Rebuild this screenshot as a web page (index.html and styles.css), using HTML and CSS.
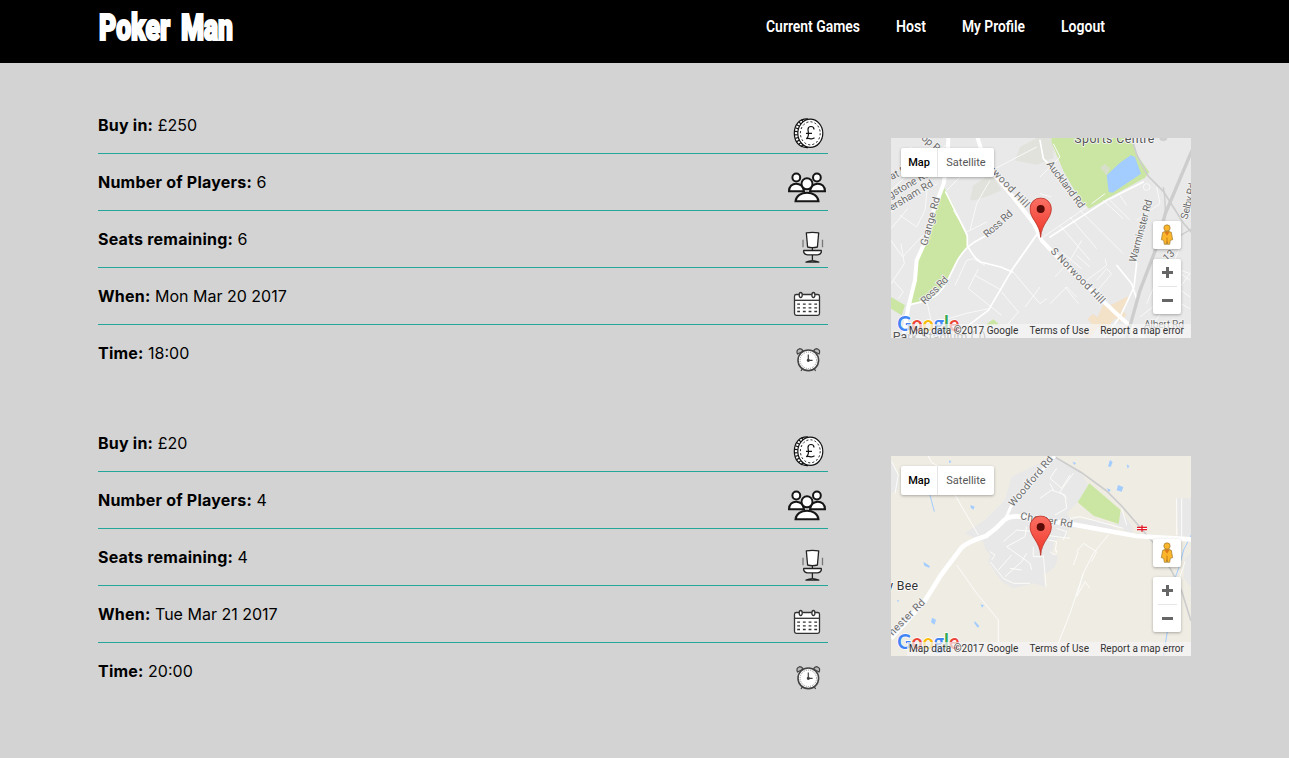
FILE: index.html
```html
<!DOCTYPE html>
<html lang="en">
<head>
<meta charset="utf-8">
<title>Poker Man</title>
<link rel="stylesheet" href="styles.css">
</head>
<body>
<svg class="sprite" aria-hidden="true">
  <symbol id="coin" viewBox="0 0 44 40">
    <path d="M24 6C15 5.500 10.300 12 10.300 20.300S15 35 24 34.600" fill="#fff" stroke="#111" stroke-width="1.200"/>
    <path d="M19 7.500C14 11 12.200 15 12.200 20.300S14 30 19 33.500" fill="none" stroke="#111" stroke-width="3" stroke-dasharray="1.200 2"/>
    <ellipse cx="26.300" cy="20.300" rx="12.500" ry="14.100" fill="#fff" stroke="#111" stroke-width="1.200"/>
    <ellipse cx="26.300" cy="20.300" rx="9.900" ry="11.500" fill="none" stroke="#111" stroke-width="1" stroke-dasharray="2 2.200"/>
    <path d="M30 16.500c0-4-6-4-6 0 0 3 2.200 6.500-1.800 9.300 3-1.500 5 1.600 8.300-1M22 20.300h6" fill="none" stroke="#111" stroke-width="1.200"/>
  </symbol>
  <symbol id="players" viewBox="0 0 44 40">
    <g fill="#fff" stroke="#161616" stroke-width="2">
      <circle cx="12.300" cy="7.500" r="3.900"/><circle cx="32.900" cy="7.500" r="3.900"/>
      <path d="M5 21.200c0-10 14-10 15 0zM26 21.200c1-10 15-10 15 0z"/>
      <path d="M11.500 31.300c1-11.500 22-11.500 23 0z"/>
      <circle cx="23" cy="13.800" r="5.500"/>
    </g>
  </symbol>
  <symbol id="chair" viewBox="0 0 44 40">
    <g fill="#fff" stroke="#222" stroke-width="1.300" stroke-linejoin="round">
      <path d="M22.300 5.800Q28.300 4.800 34.700 5.800L33.400 20q-5 1.300-9.800 0z"/>
      <path d="M19.700 23.500h17.600v1.800q-1 2.500-3.800 2.500h-10q-2.800 0-3.800-2.500z"/>
      <path d="M28.400 20.600v2.900M28.400 28v5M22 35.200q6.400-3.200 12.800 0z"/>
      <path d="M19 12.800v7.500M38.500 12.800v7.500" stroke="#777"/>
    </g>
  </symbol>
  <symbol id="calendar" viewBox="0 0 44 40">
    <g fill="#fff" stroke="#333" stroke-width="1.300">
      <rect x="10.500" y="10.500" width="25" height="20.800" rx="1.800"/>
      <path d="M10.500 16.300h25"/>
      <ellipse cx="16.700" cy="11" rx="1.500" ry="2.500"/><ellipse cx="29.400" cy="11" rx="1.500" ry="2.500"/>
      <path d="M13.200 20.200h20.500M13.200 23.900h20.500M13.200 27.500h20.500" stroke-dasharray="2.800 2.900"/>
    </g>
  </symbol>
  <symbol id="clock" viewBox="0 0 44 40">
    <g fill="#fff" stroke="#444" stroke-width="1.200">
      <path d="M13.500 13q-1.800-4 2-5.300 2.500 0 3.500 2.500zM35.100 13q1.800-4-2-5.300-2.500 0-3.500 2.500z" fill="#bbb"/>
      <path d="M18.500 27.500l-1.500 2.500M30.100 27.500l1.500 2.500"/>
      <circle cx="24.300" cy="19.300" r="10.300" stroke-width="1.600"/>
      <circle cx="24.300" cy="19.300" r="8.200" stroke="#777" stroke-width=".8" stroke-dasharray="1 1"/>
      <path d="M24.300 13.500v5.800h4.300" fill="none"/><circle cx="24.300" cy="19.300" r="1" fill="#333"/>
    </g>
  </symbol>
  <symbol id="pegman" viewBox="0 0 84 84">
    <path d="M29 34q13-8 26 0l4 22-7 2-2 12h-7v-7h-2v7h-7l-2-12-7-2z" fill="#fbb62c" stroke="#97752f" stroke-width="2"/>
    <circle cx="42" cy="21" r="9.500" fill="#fbb62c" stroke="#97752f" stroke-width="2"/>
    <path d="M34 32h16l-8 12z" fill="#dd7b1b"/><path d="M42 50v18" stroke="#c77a10" stroke-width="3"/>
  </symbol>
  <symbol id="marker" viewBox="0 0 68 122">
    <defs><linearGradient id="pin" x2="0" y2="1"><stop stop-color="#fb7064"/><stop offset="1" stop-color="#ee3527"/></linearGradient></defs>
    <path d="M34 120C32 78 2 65 2 34a32 32 0 0 1 64 0C66 65 36 78 34 120z" fill="url(#pin)" stroke="#b93228" stroke-width="2.500"/>
    <circle cx="34" cy="35" r="12" fill="#590b08"/>
  </symbol>
  <symbol id="logo" viewBox="0 0 200 75">
    <text x="2" y="51" class="logo-text" textLength="186" lengthAdjust="spacingAndGlyphs"><tspan fill="#4285f4">G</tspan><tspan fill="#ea4335">o</tspan><tspan fill="#fbbc05">o</tspan><tspan fill="#4285f4">g</tspan><tspan fill="#34a853">l</tspan><tspan fill="#ea4335">e</tspan></text>
  </symbol>
</svg>

<header class="topbar">
  <a class="brand">
    <svg width="74" height="63"><text x="1" y="40" textLength="71" lengthAdjust="spacingAndGlyphs">Poker</text></svg>
    <svg width="54" height="63"><text x="1" y="40" textLength="52" lengthAdjust="spacingAndGlyphs">Man</text></svg>
  </a>
  <nav class="nav">
    <a><svg width="94" height="63"><text x="0" y="32" textLength="94" lengthAdjust="spacingAndGlyphs">Current Games</text></svg></a>
    <a><svg width="30" height="63"><text x="0" y="32" textLength="30" lengthAdjust="spacingAndGlyphs">Host</text></svg></a>
    <a><svg width="63" height="63"><text x="0" y="32" textLength="63" lengthAdjust="spacingAndGlyphs">My Profile</text></svg></a>
    <a><svg width="44" height="63"><text x="0" y="32" textLength="44" lengthAdjust="spacingAndGlyphs">Logout</text></svg></a>
  </nav>
</header>

<main class="games">
  <section class="game">
    <ul class="details">
      <li><span><b>Buy in:</b> £250</span><svg class="icon"><use href="#coin"/></svg></li>
      <li><span><b>Number of Players:</b> 6</span><svg class="icon"><use href="#players"/></svg></li>
      <li><span><b>Seats remaining:</b> 6</span><svg class="icon"><use href="#chair"/></svg></li>
      <li><span><b>When:</b> Mon Mar 20 2017</span><svg class="icon"><use href="#calendar"/></svg></li>
      <li><span><b>Time:</b> 18:00</span><svg class="icon"><use href="#clock"/></svg></li>
    </ul>
    <div class="map">
      <svg class="canvas" viewBox="3 3 900 600">
        <rect width="906" height="606" fill="#e9e9e9"/>
        <path d="M375 70L390 30 440 3h50v60l-50 20zM240 190l10-45 55-35 30 50-35 15-45 15z" fill="#e1e2dc"/>
        <path d="M163 153L190 205 230 300 232 325 200 370 165 440 130 485 62 504 82 375 110 310 135 225zM3 480l42 25-10 30L3 515zM485 3h240l20 57 33 45-13 17-168 93-27-27-48-82-37-88zM285 565l25-18 20 18z" fill="#cbe6a3"/>
        <path d="M630 92l15-12 15 15-10 20z" fill="#d7dfcb"/>
        <path d="M722 55l13 5 18 50-85 57-12-2-6-50 40-38z" fill="#a3ccff"/>
        <path d="M640 500l15 8 60-30-5 25-15 15 15 15-20 20-15-10-15 20 10 25-20 10-25-30-30 40-15-12 25-35-12-15 15-15 15 10z" fill="#f3e1c8"/>
        <g fill="none" stroke="#f9f9f9" stroke-width="3" stroke-linejoin="round">
          <path d="M3 160l75-70 90-65M3 225l80-55 60-30M30 235l50 35 25-50 10-95M3 310l35 50 60-65M3 440l40-60-10-60M3 275l50-60M10 430l30 35-15 20M60 30l80 50"/>
          <path d="M170 160l45-45M300 130l-40 70-20 80M190 220l40 65 60-30M315 95L440 30M450 170l35 10M450 120l60-60-20-40"/>
          <path d="M195 445l35-75 20-5 35 20M255 415l80 45M235 455l30-60M235 455l100 80M110 490l15 70 100-30 70-15M335 465l50 60-60 70"/>
          <path d="M365 400l85 100 20-15M450 450l-45 60M370 390l70-100M460 300l130-90M510 265l90 105M540 240l80 95M570 220l130 130M640 190l60 55M605 200l40-30M660 190l60 60M665 185l60-35M690 175l20 30"/>
          <path d="M480 500l50-50 30 30M495 420l45-50 35-60M515 345l60 50M560 355l40 35M590 430l60-45-5-20M620 430l30-35 15 15-50 60M525 450l40 50"/>
          <path d="M770 500l30-70 60-20M750 540l50-40 55-30M770 590l45-65M870 330l-25 60 55 40M845 390l55 20-55 75 55 30M860 450l40 30M720 560l60 30M800 150l10 50-70 50"/>
          <circle cx="770" cy="150" r="10"/>
        </g>
        <g fill="none" stroke="#fff" stroke-linecap="round" stroke-linejoin="round">
          <path d="M60 503l50-12q35-12 60-55l32-65q20-35 50-55l45-25M232 325v-30l-65-130M232 325q20 40 40 50l60 15 35 15M295 520l70-120 85-120M480 300L650 190l110-55M680 385l45 55 15 45M235 565l60-45M450 10l10 55 25 25" stroke-width="5"/>
          <path d="M175 0l-2 60-12 80-30 80-24 90-27 60-5 60-20 80-15 90" stroke-width="12"/>
          <path d="M262 0l25 80 90 110 55 70 23 50 75 80 160 150 75 65" stroke-width="12"/>
          <path d="M640 605l50-65 42-90 8-70-10-40" stroke-width="5"/>
        </g>
        <g fill="none" stroke="#cdcdcd">
          <path d="M906 40l-80 190-30 110-46 120-42 150" stroke-width="10"/>
          <path d="M725 3l15 50 35 65 45 45 60 95 26 30" stroke-width="5"/>
          <path d="M830 320l76-45M820 150q15 80-10 170" stroke-width="4"/>
          <circle cx="820" cy="0" r="12" fill="#cfcfcf"/>
        </g>
        <g class="road">
          <text transform="translate(92 6) rotate(39)">op Rd</text>
          <text transform="translate(5 129) rotate(-27)">at Rd</text>
          <text transform="translate(1 185) rotate(-30)">gstone Rd</text>
          <text transform="translate(5 222) rotate(-31)">ersham Rd</text>
          <text transform="translate(111 328) rotate(-75)" textLength="150">Grange Rd</text>
          <text transform="translate(297 100) rotate(46)" textLength="158">rwood Hill</text>
          <text transform="translate(292 303) rotate(-42)" textLength="105">Ross Rd</text>
          <text transform="translate(104 503) rotate(-45)" textLength="103">Ross Rd</text>
          <text transform="translate(469 82) rotate(53)" textLength="167">Auckland Rd</text>
          <text transform="translate(480 344) rotate(46)" textLength="220">S Norwood Hill</text>
          <text transform="translate(737 377) rotate(-75)" textLength="192">Warminster Rd</text>
          <text transform="translate(892 248) rotate(-76)" textLength="110">Selby Rd</text>
          <text transform="translate(830 375) rotate(-43)">13</text>
          <text x="762" y="572" textLength="120">Albert Rd</text>
        </g>
        <text class="place" x="553" y="18" textLength="240">Sports Centre</text>
        <text class="place" x="8" y="612" textLength="280">Park Stadium (J)</text>
        <use href="#logo" x="20" y="532" width="200" height="75"/>
        <use href="#marker" x="418" y="181" width="68" height="122"/>
      </svg>
      <div class="types"><b>Map</b><span>Satellite</span></div>
      <div class="peg"><svg width="28" height="28"><use href="#pegman"/></svg></div>
      <div class="zoom"><i class="plus"></i><i class="minus"></i></div>
      <div class="credits"><span>Map data ©2017 Google</span><span>Terms of Use</span><span>Report a map error</span></div>
    </div>
  </section>

  <section class="game">
    <ul class="details">
      <li><span><b>Buy in:</b> £20</span><svg class="icon"><use href="#coin"/></svg></li>
      <li><span><b>Number of Players:</b> 4</span><svg class="icon"><use href="#players"/></svg></li>
      <li><span><b>Seats remaining:</b> 4</span><svg class="icon"><use href="#chair"/></svg></li>
      <li><span><b>When:</b> Tue Mar 21 2017</span><svg class="icon"><use href="#calendar"/></svg></li>
      <li><span><b>Time:</b> 20:00</span><svg class="icon"><use href="#clock"/></svg></li>
    </ul>
    <div class="map">
      <svg class="canvas" viewBox="3 3 900 600">
        <rect width="906" height="606" fill="#efece3"/>
        <path d="M490 5l85 50 20 35-30 50-35 35 10 15 105 10 60 40-170-25-5 30-35 10-10 40 20 10-10 30-20 15-15 10 5 35-35-10-60 15-35-20-40-60 5-20-15-20-5-20-55-25 60-40 60-60 20-70zM695 170l35 50-5 20-50-30zM3 15l25 50-5 40-20 10zM860 130h46v125l-40-5zM885 310l21-20v110l-25-30z" fill="#e8e8e8"/>
        <path d="M598 85l94 80-6 42-75-25-48-40z" fill="#cbe6a3"/>
        <path d="M660 15l8 6-6 15-8-2zM710 28l8 5-5 8zM548 20l10 4-5 6zM650 100l12 4-5 8zM684 90l16 6-5 14-15-4zM242 150l12 5-4 9-8-6zM100 320l20 14-3 4-14-6zM126 488l12 6-4 15-11-7zM254 498l14 15-5 5-10-13zM272 448l10 3-6 7zM22 434l6 3-5 5zM178 15l7 6-8 3zM250 560l8 5-6 10z" fill="#a3ccff"/>
        <path d="M120 120l13 50M906 235l-25 50-15 55-15 40M832 530l-12 75" fill="none" stroke="#a3ccff" stroke-width="3"/>
        <g fill="none" stroke="#fcfcfa" stroke-width="3" stroke-linejoin="round">
          <path d="M195 120l70 120M200 330l60 85 65 80v110M115 3l10 20 40 20M5 20l20 40-10 55M500 40l-20 30 35 30 25-40M550 55l-40 55 20 20M450 130l35-25 40 15 5 40-35 20M490 105l-10-20M350 275l55-30 5-30M340 260l40-35 50 5M300 290l15 10-10 15M350 275l70 50 5 20M325 345l40-45M345 365l50-45 15-25M360 340l35 5M300 320l40 50 30 15h50M460 300l8 95M430 275v30h30M475 255l25 5-5 30M480 290q20 20 20-5M500 220l30 10-10 25M460 240l80 10M560 290l20-25 40 25-15 30M550 330l15-40M655 240l-45 55-30 60-20 70 25-45 15 20M580 355l-40 120-35 90M710 210l-15-50M860 130v110M875 130v120M885 320l-20 60M540 190l30-5 130 35"/>
        </g>
        <path d="M490 3l85 50 75 55 45 45 95 110 55 85 30 60 28 90" fill="none" stroke="#cdcdcd" stroke-width="5"/>
        <g fill="none" stroke="#fff" stroke-linejoin="round">
          <path d="M345 195l20-45L495 3" stroke-width="9"/>
          <path d="M3 550l100-110 50-80 60-80q15-18 75-37 30-20 55-48 20-15 55-9l150 22 190 35 165 10" stroke-width="14"/>
        </g>
        <g class="road">
          <text transform="translate(370 157) rotate(-50)" textLength="188">Woodford Rd</text>
          <text transform="translate(390 193) rotate(9)" textLength="158">Chester Rd</text>
          <text transform="translate(8 543) rotate(-45)" textLength="140">nester Rd</text>
        </g>
        <text class="town" x="-8" y="404" textLength="92">y Bee</text>
        <path d="M741 216h30v8h-30z" fill="#fff"/>
        <path d="M741 217h30M741 224h30M756 211v19" stroke="#e51b2b" stroke-width="4"/>
        <use href="#logo" x="20" y="532" width="200" height="75"/>
        <use href="#marker" x="418" y="181" width="68" height="122"/>
      </svg>
      <div class="types"><b>Map</b><span>Satellite</span></div>
      <div class="peg"><svg width="28" height="28"><use href="#pegman"/></svg></div>
      <div class="zoom"><i class="plus"></i><i class="minus"></i></div>
      <div class="credits"><span>Map data ©2017 Google</span><span>Terms of Use</span><span>Report a map error</span></div>
    </div>
  </section>
</main>
</body>
</html>
```

FILE: styles.css
```css
* { box-sizing: border-box; }
body { margin: 0; background: #d3d3d3; color: #000; font-family: Inter, "Liberation Sans", sans-serif; height: 758px; overflow: hidden; }
.sprite { position: absolute; width: 0; height: 0; }
svg { display: block; }

.topbar { height: 63px; background: #000; display: flex; justify-content: space-between; padding: 0 184px 0 98px; }
.topbar text { fill: #fff; font-family: Roboto, sans-serif; }
.brand { display: flex; gap: 8px; }
.brand text { font-size: 36px; font-weight: 900; stroke: #fff; stroke-width: 2.200px; }
.nav { display: flex; gap: 36px; }
.nav text { font-size: 16.500px; font-weight: 600; }

.games { padding: 34px 98px 0; }
.game { display: flex; justify-content: space-between; align-items: flex-start; height: 318px; }
.details { list-style: none; margin: 0; padding: 0; width: 730px; font-size: 16px; }
.details li { height: 57px; display: flex; justify-content: space-between; align-items: flex-start; border-bottom: 1px solid #26a69a; }
.details li:last-child { border-bottom: 0; }
.details span { line-height: 24px; padding-top: 16px; }
.details b { font-weight: 650; letter-spacing: .220px; }
.icon { width: 44px; height: 40px; margin-top: 16px; }

.map { position: relative; width: 300px; height: 200px; margin-top: 41px; overflow: hidden; font-family: Roboto, sans-serif; }
.canvas { width: 300px; height: 200px; }
.road { font-size: 31px; fill: #6c6c6c; stroke: #f4f4f4; stroke-width: 5px; paint-order: stroke; }
.place { font-size: 37px; fill: #555; stroke: #f4f4f4; stroke-width: 5px; paint-order: stroke; }
.town { font-size: 37px; fill: #333; stroke: #fff; stroke-width: 4px; paint-order: stroke; }
.logo-text { font-family: Lato, sans-serif; font-size: 61px; font-weight: 700; stroke: #fff; stroke-width: 4px; paint-order: stroke; }

.types, .peg, .zoom { position: absolute; background: #fff; border-radius: 2px; box-shadow: 0 1px 3px rgba(0, 0, 0, .3); }
.types { left: 10px; top: 10px; width: 93px; height: 29px; display: flex; font-size: 11px; line-height: 29px; text-align: center; }
.types b { width: 37px; font-weight: 500; border-right: 1px solid #e6e6e6; }
.types span { flex: 1; color: #565656; }
.peg { left: 262px; top: 83px; width: 28px; height: 28px; }
.zoom { left: 262px; top: 121px; width: 28px; height: 55px; display: flex; flex-direction: column; align-items: center; }
.plus, .minus { width: 19px; height: 27px; background: linear-gradient(#666, #666) center / 11px 3px no-repeat; }
.plus { height: 28px; border-bottom: 1px solid #e6e6e6; background: linear-gradient(#666, #666) center / 11px 3px no-repeat, linear-gradient(#666, #666) center / 3px 11px no-repeat; }
.credits { position: absolute; left: 16px; right: 0; bottom: 0; height: 14px; padding: 0 7px 0 2px; display: flex; justify-content: space-between; background: rgba(245, 245, 245, .7); color: #333; font-size: 10px; letter-spacing: .020px; line-height: 14px; white-space: nowrap; }
```
